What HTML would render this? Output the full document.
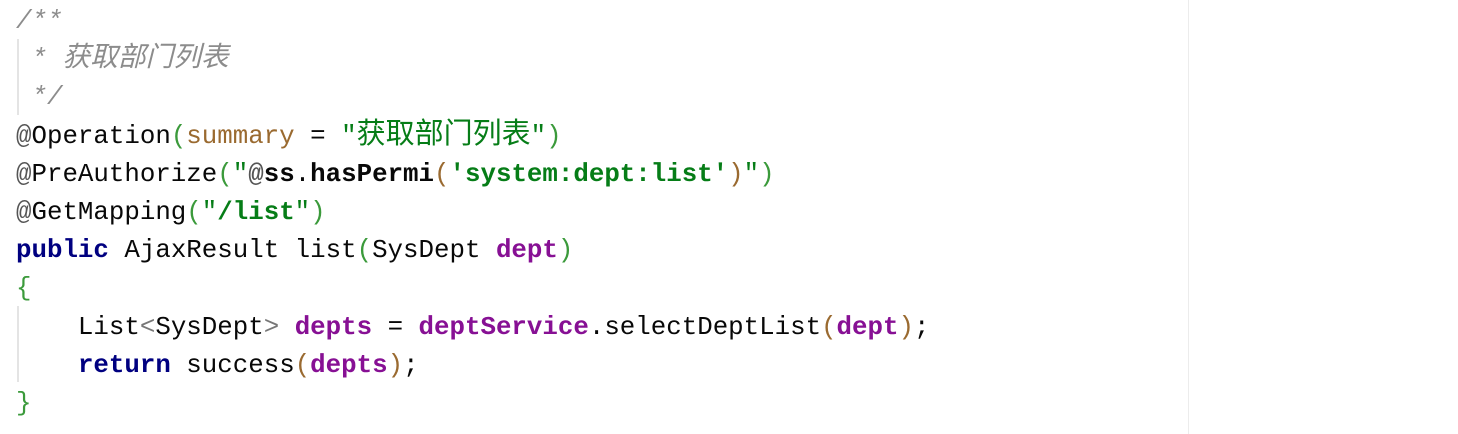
<!DOCTYPE html>
<html><head><meta charset="utf-8"><style>
html,body{margin:0;padding:0;background:#fff;width:1458px;height:434px;overflow:hidden;position:relative}
pre{position:absolute;left:16px;top:3px;margin:0;font-family:"Liberation Mono","Noto Sans CJK SC",monospace;font-size:25.8px;line-height:38.2px;color:#080808;white-space:pre}
.cj{font-size:27.7px;line-height:20px}
.cj2{font-size:29px;line-height:20px}
.c{color:#8c8c8c;font-style:italic}
.g{color:#3b9a3b}
.br{color:#9a6a30}
.s{color:#067d17}
.sb{color:#067d17;font-weight:bold}
.b{font-weight:bold}
.k{color:#000080;font-weight:bold}
.p{color:#871094;font-weight:bold}
.gr{color:#777}
.at{color:#555}
.vl{position:absolute;left:1188px;top:0;width:1px;height:434px;background:#ececec}
.ig{position:absolute;left:17px;width:2px;background:#e4e4e4}
</style></head><body>
<div class="vl"></div>
<div class="ig" style="top:39px;height:76px"></div>
<div class="ig" style="top:306px;height:76px"></div>
<pre><span class="c">/**</span>
<span class="c"> * <span class="cj">获取部门列表</span></span>
<span class="c"> */</span>
<span class="at">@</span>Operation<span class="g">(</span><span class="br">summary</span> = <span class="s">"<span class="cj2">获取部门列表</span>"</span><span class="g">)</span>
<span class="at">@</span>PreAuthorize<span class="g">(</span><span class="s">"</span><span class="b"><span class="at">@</span>ss</span>.<span class="b">hasPermi</span><span class="br">(</span><span class="sb">'system:dept:list'</span><span class="br">)</span><span class="s">"</span><span class="g">)</span>
<span class="at">@</span>GetMapping<span class="g">(</span><span class="s">"</span><span class="sb">/list</span><span class="s">"</span><span class="g">)</span>
<span class="k">public</span> AjaxResult list<span class="g">(</span>SysDept <span class="p">dept</span><span class="g">)</span>
<span class="g">{</span>
    List<span class="gr">&lt;</span>SysDept<span class="gr">&gt;</span> <span class="p">depts</span> = <span class="p">deptService</span>.selectDeptList<span class="br">(</span><span class="p">dept</span><span class="br">)</span>;
    <span class="k">return</span> success<span class="br">(</span><span class="p">depts</span><span class="br">)</span>;
<span class="g">}</span></pre>
</body></html>
